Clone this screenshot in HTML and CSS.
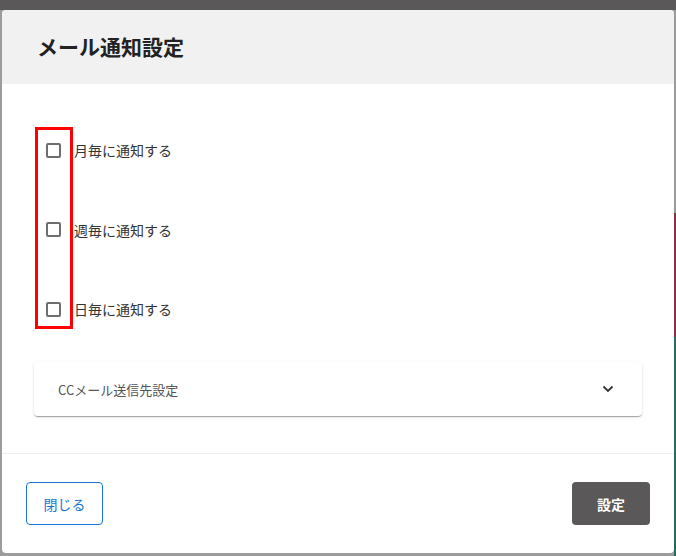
FILE: index.html
```html
<!DOCTYPE html>
<html lang="ja">
<head>
<meta charset="utf-8">
<title>メール通知設定</title>
<link rel="stylesheet" href="styles.css">
</head>
<body>
<div class="backdrop">
  <div class="page-strip"><span class="strip-gray"></span><span class="strip-red"></span><span class="strip-green"></span></div>
  <div class="dialog">
    <div class="dialog-header">
      <h2 class="dialog-title">メール通知設定</h2>
    </div>
    <div class="dialog-body">
      <div class="annotation"></div>
      <label class="check-row"><span class="check-box"></span><span class="check-label">月毎に通知する</span></label>
      <label class="check-row"><span class="check-box"></span><span class="check-label">週毎に通知する</span></label>
      <label class="check-row"><span class="check-box"></span><span class="check-label">日毎に通知する</span></label>
      <div class="accordion">
        <span class="accordion-title">CCメール送信先設定</span>
        <svg class="chevron" width="12" height="8" viewBox="0 0 12 8"><path d="M1.5 1.5 L6 6 L10.5 1.5" fill="none" stroke="#333" stroke-width="1.8"/></svg>
      </div>
    </div>
    <div class="dialog-footer">
      <button class="btn btn-outline">閉じる</button>
      <button class="btn btn-dark">設定</button>
    </div>
  </div>
</div>
</body>
</html>
```
FILE: styles.css
```css
* { box-sizing: border-box; }
html, body { margin: 0; padding: 0; }
body {
  width: 676px;
  height: 556px;
  overflow: hidden;
  font-family: "Noto Sans CJK JP", "Noto Sans", sans-serif;
}
.backdrop {
  position: relative;
  width: 676px;
  height: 556px;
  background: linear-gradient(#5a5858 0, #5a5858 10px, #9c9c9c 10px);
  padding: 10px 0 0 2px;
}
.page-strip {
  position: absolute;
  right: 0;
  top: 10px;
  width: 2px;
  height: 546px;
  display: flex;
  flex-direction: column;
}
.strip-gray { height: 203px; background: #9a9a9a; }
.strip-red { height: 124px; background: #8c3046; }
.strip-green { flex: 1; background: #226e5d; }
.dialog {
  position: relative;
  width: 672px;
  height: 543px;
  background: #fff;
  border-radius: 4px;
  overflow: hidden;
  display: flex;
  flex-direction: column;
}
.dialog-header {
  height: 74px;
  background: #f1f1f1;
  display: flex;
  align-items: center;
  padding-left: 35px;
}
.dialog-title {
  margin: 0;
  font-size: 21px;
  font-weight: 700;
  color: #222;
  letter-spacing: 0;
  line-height: 1;
  padding-bottom: 1px;
}
.dialog-body {
  position: relative;
  height: 370px;
  padding: 46px 32px 0 32px;
  border-bottom: 1px solid #eeeeee;
  display: flex;
  flex-direction: column;
}
.annotation {
  position: absolute;
  left: 33px;
  top: 43px;
  width: 38px;
  height: 202px;
  border: 3px solid #ff0000;
}
.check-row {
  height: 40px;
  display: flex;
  align-items: center;
  margin-bottom: 39.5px;
  padding-left: 12px;
}
.check-row:nth-of-type(3) { margin-bottom: 33px; }
.check-box {
  width: 15px;
  height: 15px;
  border: 2px solid #6e6e6e;
  border-radius: 2px;
  margin-right: 13px;
}
.check-label {
  font-size: 14px;
  color: #333;
  line-height: 1;
}
.accordion {
  width: 608px;
  height: 54px;
  background: #fff;
  border-radius: 4px;
  box-shadow: 0 2px 1px -1px rgba(0,0,0,.2), 0 1px 1px 0 rgba(0,0,0,.14), 0 1px 3px 0 rgba(0,0,0,.12);
  display: flex;
  align-items: center;
  justify-content: space-between;
  padding: 0 28px 0 24px;
}
.accordion-title {
  font-size: 13px;
  color: #555;
}
.chevron { display: block; }
.dialog-footer {
  flex: 1;
  display: flex;
  align-items: flex-start;
  justify-content: space-between;
  padding: 28px 24px 0 24px;
}
.btn {
  height: 43px;
  border-radius: 4px;
  font-family: "Noto Sans CJK JP", "Noto Sans", sans-serif;
  font-size: 14px;
  cursor: pointer;
}
.btn-outline {
  width: 77px;
  background: #fff;
  border: 1px solid #1976d2;
  color: #1976d2;
}
.btn-dark {
  width: 78px;
  background: #5a5858;
  border: none;
  color: #fff;
  font-weight: 700;
}
```
